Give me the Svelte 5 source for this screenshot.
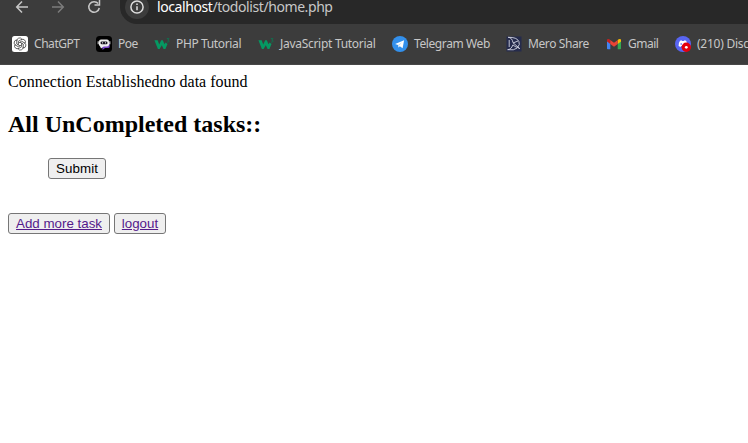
<script>
  const bookmarks = [
    { icon: 'gpt', label: 'ChatGPT', width: 46, spacing: -0.45 },
    { icon: 'poe', label: 'Poe', width: 20, spacing: -0.5 },
    { icon: 'w3', label: 'PHP Tutorial', width: 66, spacing: -0.36 },
    { icon: 'w3', label: 'JavaScript Tutorial', width: 96, spacing: -0.29 },
    { icon: 'telegram', label: 'Telegram Web', width: 76, spacing: -0.4 },
    { icon: 'mero', label: 'Mero Share', width: 62, spacing: -0.4 },
    { icon: 'gmail', label: 'Gmail', width: 31, spacing: -0.5 },
    { icon: 'discord', label: '(210) Discord', width: 80, spacing: -0.25 }
  ];
</script>

<div class="window">
  <header>
    <div class="toolbar">
      <svg class="nav" width="120" height="24" viewBox="0 0 120 24" fill="none" stroke-width="1.5">
        <path d="M28 7H17M22 1.5L16.7 7l5.3 5.5" stroke="#c7c7c7" />
        <path d="M52 7h11M58 1.5L63.3 7 58 12.5" stroke="#7c7c7c" />
        <path d="M98.2 3.6A5.3 5.3 0 1 0 99.3 8" stroke="#c7c7c7" />
        <path d="M99.5 0v5h-5" stroke="#c7c7c7" />
      </svg>
      <div class="omnibox">
        <svg class="info" width="28" height="24" viewBox="0 0 28 24">
          <circle cx="14" cy="7" r="12" fill="#3c3c3c" />
          <circle cx="14" cy="7" r="6.1" fill="none" stroke="#dedede" stroke-width="1.5" />
          <path d="M14 6.3v4M14 3.5v1.6" stroke="#dedede" stroke-width="1.5" />
        </svg>
        <span class="url"><b>localhost</b>/todolist/home.php</span>
      </div>
    </div>
    <nav>
      {#each bookmarks as b}
        <div class="bookmark">
          <svg width="16" height="16" viewBox="0 0 16 16">
            {#if b.icon === 'gpt'}
              <rect width="16" height="16" rx="2.5" fill="#fff" />
              <g fill="none" stroke="#333" stroke-width=".7">
                {#each [0, 60, 120, 180, 240, 300] as a}
                  <path transform="rotate({a} 8 8)" d="M4.9 4.7A2.7 2.7 0 0 1 9.9 3.2M9.9 3.2L6.4 5.2V8.9" />
                {/each}
              </g>
            {:else if b.icon === 'poe'}
              <rect width="16" height="16" rx="3.5" fill="#000" />
              <path d="M5 7h8.7v3.4q0 1.6-1.6 1.6H9l-2.5 2v-2H5z" fill="#7844c4" />
              <rect x="3" y="3.4" width="10" height="7.2" rx="2" fill="#eee" />
              <path d="M2.2 5.3v3M13.8 5.3v3" stroke="#ddd" stroke-width="1.1" />
              <path d="M4 10h4l-3 2.5z" fill="#eee" />
              <rect x="4.5" y="5.4" width="7" height="2.9" rx="1.4" fill="#17131f" />
              <path d="M6.5 6.3v1.1M9.5 6.3v1.1" stroke="#fff" stroke-width=".9" />
            {:else if b.icon === 'w3'}
              <path d="M.4 4.2h3.3l1.5 4.2 2-4.2h1.6l1.7 4.1 1-1.9 2 1.5-2.1 5H9.6L7.8 9.2 5.6 13H3.9z" fill="#059862" />
              <path d="M12.8 2.6h2.1l-1.1 1.6q1.3.1 1.2 1.1-.1 1.2-2.2.8" fill="none" stroke="#087b53" stroke-width=".8" />
            {:else if b.icon === 'telegram'}
              <circle cx="8" cy="8" r="8" fill="#3390ec" />
              <path d="M3.1 7.9l9-3.7-1.5 8-2.8-2-1.3 1.4-.5-2.5z" fill="#fff" />
              <path d="M6 9l4-2.8-3 3.5-.5 1.8z" fill="#b9d9f5" />
            {:else if b.icon === 'mero'}
              <rect width="15" height="15" x=".5" y=".5" fill="#252b4c" />
              <g fill="none" stroke="#d3d5e2" stroke-width=".9">
                <path d="M2.2 1.3q3.9.2 4.8 5.4l6.8 5.9q-5.9-2.4-6.9-3.7-1.6 4.6-5.4 4.8M2.2 1.3q8.8-.2 10.7 4.2 1.4 3.2-1.1 5.5M1.8 13.7q6.5.9 9.2-1.6M3.2 4v7M7 7l5-2" />
              </g>
            {:else if b.icon === 'gmail'}
              <path d="M1 4v8.5q0 .8.8.8h2.5V6z" fill="#4285f4" />
              <path d="M11.7 6v7.3h2.5q.8 0 .8-.8V4z" fill="#34a853" />
              <path d="M11.7 4l1-.8Q15 2.2 15 4.3v1.1l-3.3 2.5z" fill="#fbbc04" />
              <path d="M4.3 4l-1-.8Q1 2.2 1 4.3v1.1l3.3 2.5z" fill="#c5221f" />
              <path d="M4.3 4L8 6.8 11.7 4v3.9L8 10.7 4.3 7.9z" fill="#ea4335" />
            {:else}
              <circle cx="8" cy="8" r="8" fill="#5865f2" />
              <path d="M5 4.8l1.5-.5.5.7h2l.5-.7 1.6.5q1.5 2.2 1.3 5.2l-1.8 1-.7-.9H6.2l-.7.9-1.9-1q-.2-3 1.4-5.2" fill="#fff" />
              <path d="M6.2 7.3v1.5M9.6 7v1" stroke="#5865f2" stroke-width="1.3" />
              <circle cx="11.3" cy="11.3" r="4.7" fill="#e4000f" />
              <circle cx="11.3" cy="11.3" r="1.4" fill="#fff" />
            {/if}
          </svg>
          <span class="label" style="width:{b.width}px;letter-spacing:{b.spacing}px">{b.label}</span>
        </div>
      {/each}
    </nav>
  </header>

  <main>
    Connection Establishedno data found
    <h2>All UnCompleted tasks::</h2>
    <form onsubmit={(e) => e.preventDefault()}>
      <button class="submit">Submit</button>
    </form>
    <div class="actions">
      <button class="add"><a href="#add">Add more task</a></button>
      <button class="logout"><a href="#logout">logout</a></button>
    </div>
  </main>
</div>

<style>
  .window {
    height: 443px;
    overflow: hidden;
    background: #fff;
    color: #000;
  }
  header {
    box-sizing: border-box;
    height: 65px;
    background: #3c3c3c;
    border-bottom: 1px solid #484848;
    overflow: hidden;
  }
  .toolbar {
    display: flex;
    height: 24px;
  }
  .nav {
    flex: none;
  }
  .omnibox {
    display: flex;
    flex: 1;
    background: #282828;
    border-bottom-left-radius: 17px;
  }
  .info {
    margin-left: 3px;
    flex: none;
  }
  .url {
    margin-left: 6px;
    font: 14px/14px "Noto Sans", sans-serif;
    letter-spacing: -0.42px;
    color: #c7c7c7;
    white-space: nowrap;
  }
  .url b {
    font-weight: 400;
    color: #fff;
  }
  nav {
    display: flex;
    height: 40px;
    align-items: center;
    padding-left: 12px;
    gap: 16px;
  }
  .bookmark {
    display: flex;
    flex: none;
    align-items: center;
    gap: 6px;
  }
  .label {
    font: 12px/16px "Noto Sans", sans-serif;
    color: #c7c7c7;
    white-space: nowrap;
  }
  main {
    padding: 8px;
    font: 16px/18px "Liberation Serif", serif;
  }
  h2 {
    margin: 20px 0;
    font-size: 24px;
    line-height: 27px;
  }
  form {
    padding-left: 40px;
    display: flex;
  }
  button {
    box-sizing: border-box;
    height: 21px;
    margin: 0;
    padding: 1px 0;
    border: 1px solid #767676;
    border-radius: 3px;
    background: #efefef;
    color: #000;
    font: 13.333px/15px "Liberation Sans", sans-serif;
    white-space: nowrap;
  }
  .submit {
    width: 58px;
    letter-spacing: 0.1px;
  }
  .add {
    width: 102px;
  }
  .logout {
    width: 52px;
  }
  .actions {
    display: flex;
    gap: 4px;
    margin-top: 34px;
  }
  a {
    color: #551a8b;
    text-decoration: underline;
  }
</style>
